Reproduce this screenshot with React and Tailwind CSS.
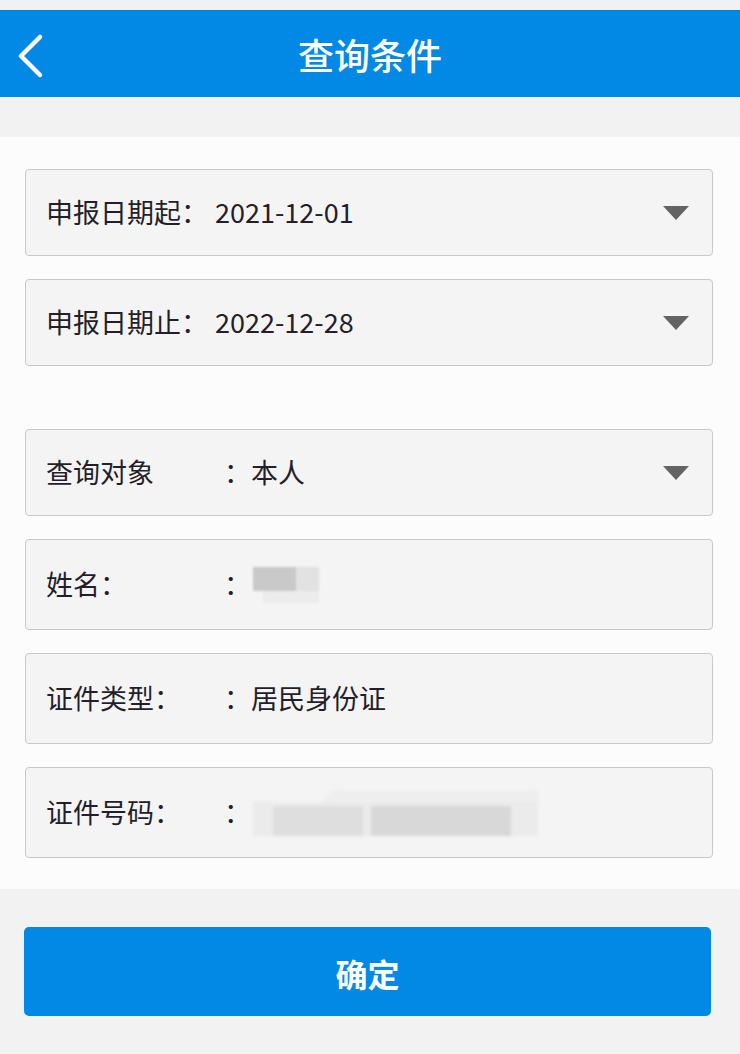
const font = { fontFamily: '"Noto Sans CJK SC", "Noto Sans", sans-serif' };

function Caret() {
  return (
    <svg width="26" height="14" viewBox="0 0 26 14" className="shrink-0">
      <polygon points="0,0 26,0 13,14" fill="#636363" />
    </svg>
  );
}

function Field({ tall, children, caret }) {
  return (
    <div
      className={`flex items-center justify-between rounded-[4px] border border-[#c9c9c9] bg-[#f4f4f4] pl-[20px] pr-[23px] ${
        tall ? "h-[91px]" : "h-[87px]"
      }`}
    >
      <div className="flex items-center text-[27px] text-[#241e2a]">{children}</div>
      {caret && <Caret />}
    </div>
  );
}

function Row({ label, children }) {
  return (
    <>
      <span className="w-[178px] shrink-0">{label}</span>
      <span>：</span>
      {children}
    </>
  );
}

export default function App() {
  return (
    <div className="w-[740px] h-[1054px] bg-[#f2f2f2] flex flex-col" style={font}>
      <div className="h-[10px] bg-[#eef2f5]" />
      <div className="relative h-[87px] bg-[#0289e6] border-t border-[#0a7fd0] flex items-center justify-center">
        <svg width="30" height="46" viewBox="0 0 30 46" className="absolute left-[15px] top-[22px]">
          <polyline
            points="25,4 6,23 25,42"
            fill="none"
            stroke="#fff"
            strokeWidth="4.5"
            strokeLinecap="round"
            strokeLinejoin="round"
          />
        </svg>
        <h1 className="text-[36px] font-medium text-white">查询条件</h1>
      </div>
      <div className="h-[40px]" />
      <div className="bg-[#fcfcfd] px-[25px] pr-[27px] pt-[32px] pb-[31px] flex flex-col">
        <Field caret>
          <span>申报日期起：</span>
          <span className="ml-[7px]">2021-12-01</span>
        </Field>
        <div className="h-[23px]" />
        <Field caret>
          <span>申报日期止：</span>
          <span className="ml-[7px]">2022-12-28</span>
        </Field>
        <div className="h-[63px]" />
        <Field caret>
          <Row label="查询对象">
            <span>本人</span>
          </Row>
        </Field>
        <div className="h-[23px]" />
        <Field tall>
          <Row label="姓名：">
            <span className="relative ml-[2px] h-[36px] w-[66px] blur-[1px]">
              <span className="absolute left-0 top-0 h-[24px] w-[43px] bg-[#c9c9c9]" />
              <span className="absolute left-[43px] top-0 h-[24px] w-[23px] bg-[#e2e2e2]" />
              <span className="absolute left-[10px] top-[24px] h-[12px] w-[56px] bg-[#ececec]" />
            </span>
          </Row>
        </Field>
        <div className="h-[23px]" />
        <Field tall>
          <Row label="证件类型：">
            <span>居民身份证</span>
          </Row>
        </Field>
        <div className="h-[23px]" />
        <Field tall>
          <Row label="证件号码：">
            <span className="relative ml-[2px] h-[46px] w-[285px] blur-[1.5px]">
              <span className="absolute left-[70px] top-0 h-[16px] w-[215px] rounded-tl-[40px] bg-[#eeeeee]" />
              <span className="absolute left-0 top-[12px] h-[34px] w-[285px] bg-[#ebebeb]" />
              <span className="absolute left-[20px] top-[16px] h-[30px] w-[90px] bg-[#dedede]" />
              <span className="absolute left-[118px] top-[16px] h-[30px] w-[140px] bg-[#d8d8d8]" />
            </span>
          </Row>
        </Field>
      </div>
      <div className="px-[24px] pr-[29px] pt-[38px]">
        <button className="w-full h-[89px] rounded-[5px] bg-[#0289e6] text-white text-[32px] font-bold pt-[3px]">
          确定
        </button>
      </div>
    </div>
  );
}
